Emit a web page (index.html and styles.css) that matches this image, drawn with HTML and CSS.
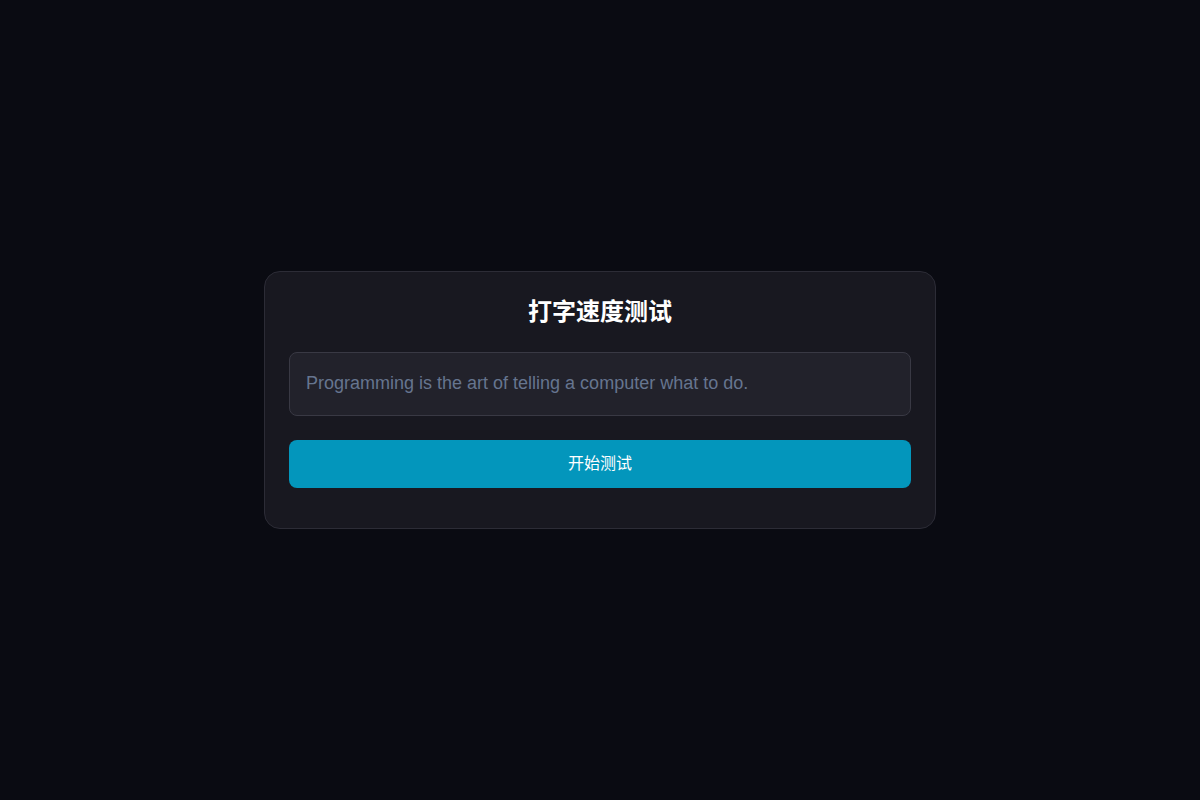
FILE: index.html
```html
<!DOCTYPE html>
<html lang="zh">
<head>
<meta charset="utf-8">
<title>打字速度测试</title>
<link rel="stylesheet" href="styles.css">
</head>
<body>
<main class="page">
  <section class="card">
    <h1 class="title">打字速度测试</h1>
    <div class="text-box">Programming is the art of telling a computer what to do.</div>
    <button class="start-btn" type="button">开始测试</button>
  </section>
</main>
</body>
</html>
```
FILE: styles.css
```css
html, body {
  margin: 0;
  padding: 0;
  height: 100%;
}
body {
  background: #0a0b12;
  font-family: "Liberation Sans", "Noto Sans CJK SC", sans-serif;
  color: #ffffff;
}
.page {
  min-height: 100vh;
  display: flex;
  align-items: center;
  justify-content: center;
}
.card {
  box-sizing: border-box;
  width: 672px;
  background: #181820;
  border: 1px solid #2c2c36;
  border-radius: 16px;
  padding: 24px 24px 40px;
  display: flex;
  flex-direction: column;
}
.title {
  margin: 1px 0 29px;
  font-size: 24px;
  line-height: 26px;
  font-weight: 700;
  text-align: center;
  color: #ffffff;
  font-family: "Noto Sans CJK SC", sans-serif;
}
.text-box {
  box-sizing: border-box;
  height: 64px;
  background: #22222b;
  border: 1px solid #393944;
  border-radius: 8px;
  padding: 0 16px 2px;
  display: flex;
  align-items: center;
  font-size: 18px;
  color: #66758f;
}
.start-btn {
  margin-top: 24px;
  height: 48px;
  padding: 0 0 4px;
  border: none;
  border-radius: 8px;
  background: #0396bc;
  color: #ffffff;
  font-family: "Noto Sans CJK SC", sans-serif;
  font-size: 16px;
  font-weight: 400;
  cursor: pointer;
}
```
